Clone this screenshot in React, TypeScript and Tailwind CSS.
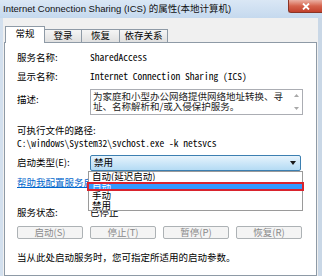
export default function App() {
  const mono = "font-['Noto_Sans_Mono_CJK_SC','Noto_Sans_CJK_SC',monospace]";
  return (
    <div className="w-[322px] h-[276px] overflow-hidden flex flex-col bg-[#f0f0f0] text-black text-[9.5px] leading-none font-['Noto_Sans_CJK_SC',sans-serif]">
      {/* title bar */}
      <div className="h-[18px] shrink-0 flex items-start bg-gradient-to-b from-[#dae7f5] to-[#c5d9ee]">
        <div className="pl-[3px] h-full flex items-center text-[9.5px] text-[#111] font-['Liberation_Sans','Noto_Sans_CJK_SC',sans-serif]">
          Internet Connection Sharing (ICS) 的属性(本地计算机)
        </div>
        <div className="ml-auto w-[34px] h-[13px] rounded-bl-[3px] border border-t-0 border-r-0 border-[#8a3426] bg-gradient-to-b from-[#eab0a4] via-[#d5624c] to-[#c2402c] flex items-center justify-center">
          <svg width="8" height="7" viewBox="0 0 8 7">
            <path d="M1 0.5 L7 6.5 M7 0.5 L1 6.5" stroke="white" strokeWidth="1.8" />
          </svg>
        </div>
      </div>
      {/* body */}
      <div className="flex-1 flex flex-col border-l-[3px] border-l-[#d3e0ee] border-r-[4px] border-r-[#c9d7e6] pl-[1px] pr-[1px]">
        {/* tabs */}
        <div className="h-[24px] shrink-0 flex items-end pl-[1px]">
          <div className="relative z-10 -mb-px w-[40px] h-[17px] bg-white border border-b-0 border-[#8e9aa6] flex items-center justify-center pb-[2px]">
            常规
          </div>
          <div className="w-[37px] h-[13px] bg-gradient-to-b from-[#f5f5f5] to-[#e0e0e0] border border-b-0 border-l-0 border-[#8e9aa6] flex items-center justify-center">
            登录
          </div>
          <div className="w-[38px] h-[13px] bg-gradient-to-b from-[#f5f5f5] to-[#e0e0e0] border border-b-0 border-l-0 border-[#8e9aa6] flex items-center justify-center">
            恢复
          </div>
          <div className="w-[48px] h-[13px] bg-gradient-to-b from-[#f5f5f5] to-[#e0e0e0] border border-b-0 border-l-0 border-[#8e9aa6] flex items-center justify-center">
            依存关系
          </div>
        </div>
        {/* panel */}
        <div className="flex-1 bg-white border border-[#8e9aa6] pl-[12px] flex flex-col">
          <div className="mt-[9px] h-[12px] flex items-center">
            <div className="w-[73px]">服务名称:</div>
            <div className={mono}>SharedAccess</div>
          </div>
          <div className="mt-[7px] h-[12px] flex items-center">
            <div className="w-[73px]">显示名称:</div>
            <div className={mono}>Internet Connection Sharing (ICS)</div>
          </div>
          <div className="mt-[6px] flex items-start">
            <div className="w-[73px] pt-[6px]">描述:</div>
            <div className="w-[213px] h-[26px] border border-[#abadb3] flex">
              <div className="flex-1 pl-[2px] pt-[1px] leading-[10px] text-[#222]">
                <div>为家庭和小型办公网络提供网络地址转换、寻</div>
                <div>址、名称解析和/或入侵保护服务。</div>
              </div>
              <div className="w-[12px] flex flex-col items-center justify-between py-[4px]">
                <svg width="5" height="3" viewBox="0 0 5 3">
                  <path d="M0 3 L2.5 0 L5 3 Z" fill="#a8a8a8" />
                </svg>
                <svg width="5" height="3" viewBox="0 0 5 3">
                  <path d="M0 0 L2.5 3 L5 0 Z" fill="#a8a8a8" />
                </svg>
              </div>
            </div>
          </div>
          <div className="mt-[10px] h-[12px] flex items-center">可执行文件的路径:</div>
          <div className={"mt-[1px] h-[12px] flex items-center " + mono}>
            C:\windows\System32\svchost.exe -k netsvcs
          </div>
          <div className="mt-[5px] h-[16px] flex items-center">
            <div className="w-[73px]">启动类型(E):</div>
            <div className="relative w-[211px] h-full">
              <div className="w-full h-full rounded-[2px] border border-[#3c7fb1] bg-gradient-to-b from-[#e6f3fc] to-[#b4dbf4] flex items-center pl-[3px] pr-[4px]">
                <span>禁用</span>
                <svg className="ml-auto" width="6" height="4" viewBox="0 0 6 4">
                  <path d="M0 0 L6 0 L3 4 Z" fill="#1a1a1a" />
                </svg>
              </div>
              {/* open list */}
              <div className="absolute top-[16px] left-[-2px] w-[215px] h-[40px] z-20 bg-white border border-[#9a9a9a] flex flex-col overflow-visible">
                <div className="h-[9px] leading-[9px] pl-[3px] overflow-hidden">自动(延迟启动)</div>
                <div className="mt-[1px] ml-[-2px] w-[217px] h-[9px] border-2 border-[#d9232d] bg-[#3399ff] overflow-hidden pl-[3px] text-white leading-[7px]">
                  自动
                </div>
                <div className="h-[9px] leading-[9px] pl-[3px] overflow-hidden">手动</div>
                <div className="h-[10px] leading-[10px] pl-[3px] overflow-hidden">禁用</div>
              </div>
            </div>
          </div>
          <div className="mt-[6px] h-[12px] flex items-center">
            <span className="text-[#0066cc] underline">帮助我配置服务启动选项。</span>
          </div>
          <div className="mt-[18px] h-[12px] flex items-center">
            <div className="w-[73px]">服务状态:</div>
            <div>已停止</div>
          </div>
          <div className="mt-[7px] h-[13px] flex gap-[7px]">
            <div className="w-[66px] h-full rounded-[2px] border border-[#adb2b5] bg-[#f4f4f4] text-[#8a8a8a] flex items-center justify-center">启动(S)</div>
            <div className="w-[66px] h-full rounded-[2px] border border-[#adb2b5] bg-[#f4f4f4] text-[#8a8a8a] flex items-center justify-center">停止(T)</div>
            <div className="w-[66px] h-full rounded-[2px] border border-[#adb2b5] bg-[#f4f4f4] text-[#8a8a8a] flex items-center justify-center">暂停(P)</div>
            <div className="w-[66px] h-full rounded-[2px] border border-[#adb2b5] bg-[#f4f4f4] text-[#8a8a8a] flex items-center justify-center">恢复(R)</div>
          </div>
          <div className="mt-[13px] h-[12px] flex items-center">当从此处启动服务时，您可指定所适用的启动参数。</div>
        </div>
      </div>
    </div>
  );
}
